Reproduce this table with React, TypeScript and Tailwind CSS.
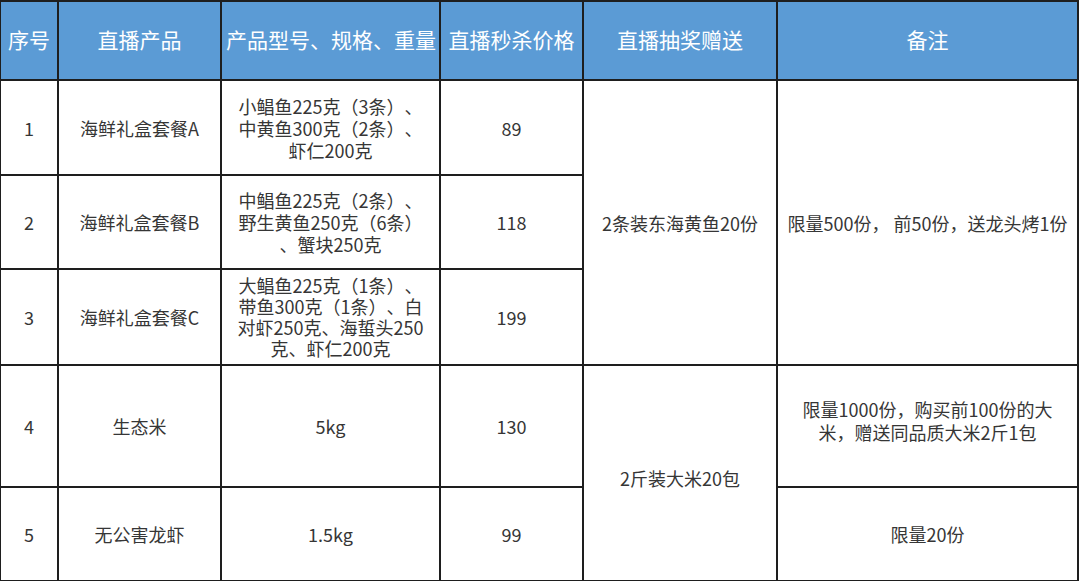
const headers = ["序号", "直播产品", "产品型号、规格、重量", "直播秒杀价格", "直播抽奖赠送", "备注"];

const cell = "border-2 border-[#1e1e1e] text-center align-middle px-1";

export default function App() {
  return (
    <div
      className="w-[1080px] h-[581px] bg-white overflow-hidden [text-spacing-trim:space-all]"
      style={{ fontFamily: '"Noto Sans CJK SC", "Noto Sans", sans-serif' }}
    >
      <table className="table-fixed border-collapse w-[1078px] text-[#363636] text-[18px] leading-[22px] -ml-px">
        <colgroup>
          <col className="w-[58px]" />
          <col className="w-[163px]" />
          <col className="w-[219px]" />
          <col className="w-[143px]" />
          <col className="w-[194px]" />
          <col className="w-[301px]" />
        </colgroup>
        <thead>
          <tr className="h-[79px] bg-[#5b9bd5] text-white text-[21px]">
            {headers.map((h) => (
              <th key={h} className={`${cell} font-normal whitespace-nowrap px-0 pb-[4px]`}>
                {h}
              </th>
            ))}
          </tr>
        </thead>
        <tbody>
          <tr className="h-[95px]">
            <td className={cell}>1</td>
            <td className={cell}>海鲜礼盒套餐A</td>
            <td className={`${cell} whitespace-nowrap px-0`}>
              小鲳鱼225克（3条）、<br />中黄鱼300克（2条）、<br />虾仁200克
            </td>
            <td className={cell}>89</td>
            <td className={cell} rowSpan={3}>2条装东海黄鱼20份</td>
            <td className={`${cell} whitespace-nowrap px-0`} rowSpan={3}>限量500份， 前50份，送龙头烤1份</td>
          </tr>
          <tr className="h-[94px]">
            <td className={cell}>2</td>
            <td className={cell}>海鲜礼盒套餐B</td>
            <td className={`${cell} whitespace-nowrap px-0`}>
              中鲳鱼225克（2条）、<br />野生黄鱼250克（6条）<br />、蟹块250克
            </td>
            <td className={cell}>118</td>
          </tr>
          <tr className="h-[96px]">
            <td className={cell}>3</td>
            <td className={cell}>海鲜礼盒套餐C</td>
            <td className={`${cell} whitespace-nowrap px-0 leading-[21px]`}>
              大鲳鱼225克（1条）、<br />带鱼300克（1条）、白<br />对虾250克、海蜇头250<br />克、虾仁200克
            </td>
            <td className={cell}>199</td>
          </tr>
          <tr className="h-[122px]">
            <td className={cell}>4</td>
            <td className={cell}>生态米</td>
            <td className={cell}>5kg</td>
            <td className={cell}>130</td>
            <td className={`${cell} pt-[10px]`} rowSpan={2}>2斤装大米20包</td>
            <td className={`${cell} pb-[10px] leading-[23px] whitespace-nowrap px-0`}>
              限量1000份，购买前100份的大<br />米，赠送同品质大米2斤1包
            </td>
          </tr>
          <tr className="h-[94px]">
            <td className={cell}>5</td>
            <td className={cell}>无公害龙虾</td>
            <td className={cell}>1.5kg</td>
            <td className={cell}>99</td>
            <td className={cell}>限量20份</td>
          </tr>
        </tbody>
      </table>
    </div>
  );
}
